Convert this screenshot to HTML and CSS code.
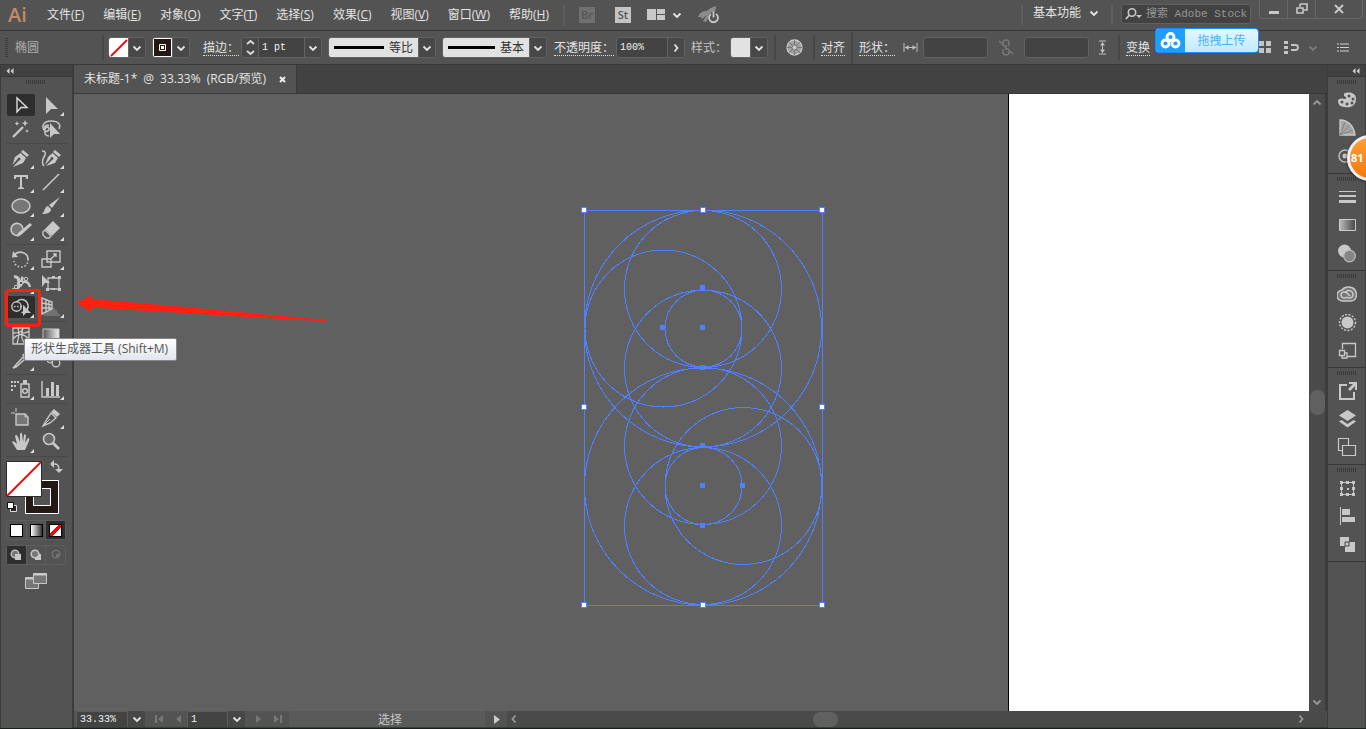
FILE: index.html
```html
<!DOCTYPE html>
<html lang="zh-CN">
<head>
<meta charset="utf-8">
<title>未标题-1</title>
<link rel="stylesheet" href="styles.css">
</head>
<body>
<svg class="sprite" aria-hidden="true">
  <symbol id="down" viewBox="0 0 10 10"><path d="M1.5 3.5 5 7 8.5 3.5" fill="none" stroke="currentColor" stroke-width="1.8"/></symbol>
  <symbol id="right" viewBox="0 0 10 10"><path d="M3.5 1.5 6.500 5 3.500 8.500" fill="none" stroke="currentColor" stroke-width="1.800"/></symbol>
  <symbol id="collapse" viewBox="0 0 8 6"><path d="M3.500 0v6L.5 3zM7.500 0v6l-3-3z" fill="#d0d0d0"/></symbol>
</svg>

<header class="menubar">
  <span class="logo">Ai</span>
  <nav class="menus">
    <a href="#">文件(<u>F</u>)</a><a href="#">编辑(<u>E</u>)</a><a href="#">对象(<u>O</u>)</a><a href="#">文字(<u>T</u>)</a><a href="#">选择(<u>S</u>)</a><a href="#">效果(<u>C</u>)</a><a href="#">视图(<u>V</u>)</a><a href="#">窗口(<u>W</u>)</a><a href="#">帮助(<u>H</u>)</a>
  </nav>
  <span class="rule tall"></span>
  <button class="app dim">Br</button>
  <button class="app">St</button>
  <button class="arrange" aria-label="排列文档">
    <svg width="18" height="12"><path d="M0 0h9v11H0zM10 0h8v5h-8zM10 6h8v5h-8z" fill="#c8c8c8"/></svg>
    <svg class="chev"><use href="#down"/></svg>
  </button>
  <button class="gpu" aria-label="GPU">
    <svg width="22" height="18" viewBox="0 0 22 18"><path d="M0 11C2 6 5 5 9 5 12 2 15 1 18 0c0 3 0 4-2 6-4 0-6 2-6 6l-2 4-3-1 4-6-5 4-1-2z" fill="#8c8c8c"/><path d="M13 8a4.500 4.500 0 1 0 5 0" fill="none" stroke="#c8c8c8" stroke-width="1.800"/><path d="M15.500 5.500v6" stroke="#c8c8c8" stroke-width="1.800"/></svg>
  </button>
  <div class="menubar-end">
    <span class="rule tall"></span>
    <button class="workspace-name">基本功能 <svg class="chev"><use href="#down"/></svg></button>
    <span class="rule tall"></span>
    <label class="search">
      <svg width="18" height="12" viewBox="0 0 18 12"><circle cx="7" cy="4.500" r="3.700" fill="none" stroke="#c8c8c8" stroke-width="1.600"/><path d="M4.500 7 .8 11" stroke="#c8c8c8" stroke-width="1.800"/><path d="M11 7h6l-3 3z" fill="#c8c8c8"/></svg>
      <input type="text" placeholder="搜索 Adobe Stock" aria-label="搜索 Adobe Stock">
    </label>
    <div class="window-buttons">
      <button aria-label="最小化"><svg width="12" height="12"><path d="M1 8h10v3H1z" fill="#c8c8c8"/></svg></button>
      <button aria-label="还原"><svg width="12" height="12"><path d="M4 1h7v6H8M4 1v3M1 5h6v5H1z" fill="none" stroke="#c8c8c8" stroke-width="1.600"/></svg></button>
      <button class="close" aria-label="关闭"><svg width="10" height="10"><path d="m1 1 8 8M9 1 1 9" stroke="#c8c8c8" stroke-width="2"/></svg></button>
    </div>
  </div>
</header>

<section class="controls">
  <span class="grip-v"></span>
  <span class="kind">椭圆</span>
  <span class="rule"></span>
  <div class="combo fill"><svg width="19" height="19"><path d="M0 0h19v19H0z" fill="#fff"/><path d="M2 18 18 2" stroke="#f00" stroke-width="1.800"/></svg><button aria-label="填色"><svg class="chev"><use href="#down"/></svg></button></div>
  <div class="combo stroke"><svg width="19" height="19"><path d="M.5.500h18v18H.5z" fill="#231815" stroke="#fff"/><path d="M6.500 6.500h6v6h-6z" fill="none" stroke="#fff"/><path d="M8 8h3v3H8z" fill="#fff"/></svg><button aria-label="描边颜色"><svg class="chev"><use href="#down"/></svg></button></div>
  <label class="dotted" for="weight">描边：</label>
  <div class="combo weight"><button class="spin" aria-label="增减"><svg width="11" height="17"><path d="m2 5 3.500-3L9 5M2 12l3.500 3L9 12" fill="none" stroke="#ddd" stroke-width="1.800"/></svg></button><input id="weight" value="1 pt"><button aria-label="描边粗细"><svg class="chev"><use href="#down"/></svg></button></div>
  <div class="combo profile"><span class="sample"><i></i>等比</span><button aria-label="宽度配置"><svg class="chev"><use href="#down"/></svg></button></div>
  <div class="combo brush"><span class="sample"><i></i>基本</span><button aria-label="画笔"><svg class="chev"><use href="#down"/></svg></button></div>
  <label class="dotted" for="opacity">不透明度：</label>
  <div class="combo opacity"><input id="opacity" value="100%"><button aria-label="不透明度选项"><svg class="chev"><use href="#right"/></svg></button></div>
  <span class="plain">样式：</span>
  <div class="combo style"><span class="pale"></span><button aria-label="图形样式"><svg class="chev"><use href="#down"/></svg></button></div>
  <span class="rule"></span>
  <button class="wheel" aria-label="重新着色"><svg width="17" height="17" viewBox="0 0 17 17"><circle cx="8.500" cy="8.500" r="7.500" fill="#a0a0a0" stroke="#ccc" stroke-width="1.300"/><path d="M8.500 1v15M1 8.500h15M3.200 3.200l10.600 10.600M13.800 3.200 3.200 13.800" stroke="#777"/><circle cx="8.500" cy="8.500" r="2.500" fill="#ccc" stroke="#777"/></svg></button>
  <span class="rule"></span>
  <a class="dotted" href="#">对齐</a>
  <span class="rule full"></span>
  <a class="dotted shape-label" href="#">形状：</a>
  <svg class="size-icon" width="15" height="9"><path d="M1 0v9M14 0v9M2 4.500h11" stroke="#c0c0c0"/><path d="M2 4.500 5.500 2v5zM13 4.500 9.500 2v5z" fill="#c0c0c0"/></svg>
  <input class="size" aria-label="宽度">
  <svg class="link" width="16" height="17"><path d="M5 7V4a3 3 0 0 1 6 0v3M5 10v3a3 3 0 0 0 6 0v-3M8 6v5M1 2l14 13" fill="none" stroke="#777" stroke-width="1.600"/></svg>
  <input class="size" aria-label="高度">
  <svg class="height-icon" width="9" height="15"><path d="M1 1h7M1 14h7M4.500 2v11" stroke="#c0c0c0"/><path d="M4.500 2 7 5.500H2zM4.500 13 7 9.500H2z" fill="#c0c0c0"/></svg>
  <span class="rule"></span>
  <a class="dotted" href="#">变换</a>
  <div class="controls-end">
    <svg width="15" height="15"><path d="M1 1h5v5H1zM8 1h5v5H8zM1 8h5v5H1zM8 8h5v5H8z" fill="#c4c4c4"/></svg>
    <svg width="15" height="13"><path d="M0 0h4v3H0zM0 5h4v3H0zM0 10h4v3H0z" fill="#c4c4c4"/><path d="M7 4h4.500a2.500 2.500 0 0 1 0 5H7" fill="none" stroke="#c4c4c4" stroke-width="1.800"/></svg>
    <svg class="chev faded"><use href="#down"/></svg>
    <button class="list" aria-label="面板菜单"><svg width="12" height="9"><path d="M0 1h2M3 1h9M0 4.500h2M3 4.500h9M0 8h2M3 8h9" stroke="#d0d0d0" stroke-width="1.200"/></svg></button>
  </div>
  <button class="upload"><span class="cloud"><svg width="22" height="17" viewBox="0 0 22 17" fill="none" stroke="#fff" stroke-width="2.800"><circle cx="10.500" cy="5" r="3.500"/><circle cx="5.500" cy="11.500" r="3.500"/><circle cx="15.500" cy="11.500" r="3.500"/></svg></span><span class="upload-text">拖拽上传</span></button>
</section>

<main class="workspace">
  <aside class="tools">
    <div class="panel-head"><svg width="8" height="6"><use href="#collapse"/></svg></div>
    <span class="grip-h"></span>
    <div class="tool-group">
      <button class="tool on" aria-label="选择"><svg viewBox="0 0 20 20"><path d="M6 3v14l4-4.500h6z" fill="none" stroke="#ddd" stroke-width="1.400"/></svg></button>
      <button class="tool more" aria-label="直接选择"><svg viewBox="0 0 20 20"><path d="M5 2v17l5-5h7z"/></svg></button>
      <button class="tool" aria-label="魔棒"><svg viewBox="0 0 20 20"><path d="M2 18 12 8" stroke="#c8c8c8" stroke-width="2.400"/><path d="m14 1 1 2.500L17.500 4 15 5l-1 2.500L13 5l-2.500-1L13 3.500zM6 2l.7 1.800L8.500 4.500 6.700 5.200 6 7l-.7-1.800-1.800-.7 1.800-.7zM16 10l.6 1.400 1.400.6-1.400.6L16 14l-.6-1.400L14 12l1.400-.6z"/></svg></button>
      <button class="tool" aria-label="套索"><svg viewBox="0 0 20 20"><path d="M4 12C0 8 2 2 10 2c8 0 10 4 8 8M8 6.500c-3-1-5 1-4 3M4 12c-1-3 2-5 4-3 1 3-3 4-4 3-1 3 1 5 4 5" fill="none" stroke="#c8c8c8" stroke-width="1.500"/><path d="M9 4v15l4-4h6z"/></svg></button>
    </div>
    <div class="tool-group">
      <button class="tool more" aria-label="钢笔"><svg viewBox="0 0 20 20"><path d="m12 2 6 5-2 2-6-5zM9.500 5l5.500 5-3 5L2 19l6-6.500A1.500 1.500 0 1 0 6.500 11L1.500 17 4 9z"/></svg></button>
      <button class="tool more" aria-label="曲率"><svg viewBox="0 0 20 20"><path d="m14 2 6 5-2 2-6-5zM11.500 5l5.500 5-3 5L5 18l6-6A1.500 1.500 0 1 0 9.500 11L4 17 7 9z"/><path d="M1 3c4 0 4 3 2 6s-2 7 0 9" fill="none" stroke="#c8c8c8" stroke-width="1.500"/></svg></button>
      <button class="tool more" aria-label="文字"><svg viewBox="0 0 20 20"><path d="M3 3h14v4h-1.500l-1-2H11v10l2 1v1H7v-1l2-1V5H5.500l-1 2H3z"/></svg></button>
      <button class="tool more" aria-label="直线段"><svg viewBox="0 0 20 20"><path d="M2 18 18 2" stroke="#c8c8c8" stroke-width="1.600"/></svg></button>
      <button class="tool more" aria-label="椭圆"><svg viewBox="0 0 20 20"><ellipse cx="10" cy="10" rx="9" ry="7" fill="#777" stroke="#c8c8c8" stroke-width="1.500"/></svg></button>
      <button class="tool more" aria-label="画笔"><svg viewBox="0 0 20 20"><path d="m19 1-8 11-3-3zM7 10l3 3c0 4-4 5-9 5 3-2 2-7 6-8z"/></svg></button>
      <button class="tool more" aria-label="Shaper"><svg viewBox="0 0 20 20"><path d="M8 15a6 6 0 1 1 4-6" fill="#777" stroke="#c8c8c8" stroke-width="1.600"/><path d="m19 3 2 2-11 10-4 2 1-4z"/></svg></button>
      <button class="tool more" aria-label="橡皮擦"><svg viewBox="0 0 20 20"><path d="m12 1 7 7-8 8-7-7z"/><path d="m4 10 6 6-2 2H5l-3-3v-3z" fill="none" stroke="#c8c8c8" stroke-width="1.400"/></svg></button>
    </div>
    <div class="tool-group">
      <button class="tool more" aria-label="旋转"><svg viewBox="0 0 20 20"><path d="M4 5c5-4 13-1 13 5" fill="none" stroke="#c8c8c8" stroke-width="1.700"/><path d="M17 10A7 7 0 0 1 3 12" fill="none" stroke="#c8c8c8" stroke-width="1.700" stroke-dasharray="1.500 2"/><path d="m2 2 5 6-6 .5z"/></svg></button>
      <button class="tool more" aria-label="缩放"><svg viewBox="0 0 20 20"><path d="M6 2h13v11H6zM1 10h9v8H1z" fill="none" stroke="#c8c8c8" stroke-width="1.400"/><path d="m10 10 5-5m-3 0h3v3" fill="none" stroke="#c8c8c8" stroke-width="1.400"/></svg></button>
      <button class="tool more" aria-label="宽度"><svg viewBox="0 0 20 20"><path d="M3 4c4-1 6 3 4 8M12 4c-3 3 0 6-3 9" fill="none" stroke="#c8c8c8" stroke-width="3"/><path d="M1 16c5 2 7-2 9-5s7-4 9 3" fill="none" stroke="#c8c8c8" stroke-width="2.400"/><path d="m4 15 12-9" stroke="#c8c8c8"/><circle cx="5" cy="14" r="1.700" fill="#535353" stroke="#ccc"/><circle cx="10" cy="10" r="1.700" fill="#535353" stroke="#ccc"/><circle cx="15" cy="6" r="1.700" fill="#535353" stroke="#ccc"/></svg></button>
      <button class="tool" aria-label="自由变换"><svg viewBox="0 0 20 20"><path d="M7 5h11v11H7z" fill="none" stroke="#c8c8c8" stroke-width="1.300"/><path d="M1 2v12l3-4h5zM5 15h3v3H5zM17 15h3v3h-3zM17 3h3v3h-3zM11 3h3v2h-3zM11 15h3v2h-3z"/></svg></button>
      <button class="tool more on" aria-label="形状生成器"><svg viewBox="0 0 20 20"><circle cx="5.500" cy="9.500" r="4.700" fill="none" stroke="#c8c8c8" stroke-width="1.400"/><path d="M5.500 5a6.500 6.500 0 1 1 5 10.500" fill="none" stroke="#c8c8c8" stroke-width="1.400"/><path d="M3 9.500h11" stroke="#c8c8c8" stroke-width="1.500" stroke-dasharray="1.500 1.500"/><path d="M12 8v11l3-3h5z"/></svg></button>
      <button class="tool more" aria-label="透视网格"><svg viewBox="0 0 20 20"><path d="M1 1v16l10-5V5zM1 6l10 2M1 11h10M5 3v12M8 4v9" fill="none" stroke="#c8c8c8" stroke-width="1.400"/><path d="M11 12h3M8 14h8M5 16h12M3 18h16" stroke="#919191"/></svg></button>
    </div>
    <div class="tool-group">
      <button class="tool" aria-label="网格"><svg viewBox="0 0 20 20"><path d="M2 2h16v16H2zM2 7c7 0 9-1 10-5M2 13c5-6 10-6 16 0M7 2c2 7 0 11-1 16M12 2c-3 9 0 14 3 16M11 7c3 0 5 0 7-2" fill="none" stroke="#c8c8c8" stroke-width="1.300"/></svg></button>
      <button class="tool" aria-label="渐变"><svg viewBox="0 0 20 20"><defs><linearGradient id="grad"><stop stop-color="#555"/><stop offset="1" stop-color="#eee"/></linearGradient></defs><path d="M2 3h16v14H2z" fill="url(#grad)" stroke="#c8c8c8"/></svg></button>
      <button class="tool more" aria-label="吸管"><svg viewBox="0 0 20 20"><path d="M3 17 12 7l2 2-9 8-3 1z" fill="none" stroke="#c8c8c8" stroke-width="1.500"/><path d="m11 5 5-4 3 3-4 5z"/></svg></button>
      <button class="tool" aria-label="混合"><svg viewBox="0 0 20 20"><path d="M2 3h7v7H2z"/><circle cx="9" cy="10" r="3" fill="#777" stroke="#c8c8c8"/><circle cx="15" cy="13" r="3.800" fill="#535353" stroke="#c8c8c8" stroke-width="1.400"/></svg></button>
    </div>
    <div class="tool-group">
      <button class="tool more" aria-label="符号喷枪"><svg viewBox="0 0 20 20"><path d="M10 5h8v13h-8z" fill="none" stroke="#c8c8c8" stroke-width="1.500"/><path d="M12 1h4v4h-4zM0 2h2v2H0zM3 2h2v2H3zM6 2h2v2H6zM0 6h2v2H0zM3 6h2v2H3zM0 10h2v2H0z"/><circle cx="14" cy="12" r="2.300" fill="none" stroke="#c8c8c8" stroke-width="1.500"/></svg></button>
      <button class="tool more" aria-label="柱形图"><svg viewBox="0 0 20 20"><path d="M1 2v16h18" fill="none" stroke="#c8c8c8" stroke-width="1.400"/><path d="M5 9h3v8H5zM10 3h3v14h-3zM15 6h3v11h-3z"/></svg></button>
    </div>
    <div class="tool-group">
      <button class="tool" aria-label="画板"><svg viewBox="0 0 20 20"><path d="M5 6h9l3 3v8H5z" fill="#777" stroke="#c8c8c8" stroke-width="1.400"/><path d="M0 5h4M5 0v4M14 6v3h3" fill="none" stroke="#c8c8c8"/></svg></button>
      <button class="tool more" aria-label="切片"><svg viewBox="0 0 20 20"><path d="m13 1 6 5-3 3-6-5z"/><path d="m10 5 5 5-6 5-7 3 4-7z" fill="none" stroke="#c8c8c8" stroke-width="1.400"/><path d="m3 17 6-6" stroke="#c8c8c8"/></svg></button>
      <button class="tool more" aria-label="抓手"><svg viewBox="0 0 20 20"><path d="M6 18 1 10c1-2 3 0 5 2L4 4c1-2 2-1 3 1l2 5V2c1-2 2-1 2 0l1 8 1-7c1-2 2 0 2 1l-1 7 3-5c2 0 1 2 1 3l-4 9z"/></svg></button>
      <button class="tool" aria-label="缩放视图"><svg viewBox="0 0 20 20"><circle cx="8" cy="7" r="5.500" fill="#696969" stroke="#c8c8c8" stroke-width="1.600"/><path d="m12 11 6 6" stroke="#c8c8c8" stroke-width="2.800"/></svg></button>
    </div>
    <button class="paint" aria-label="填色和描边"><svg width="60" height="56" viewBox="0 0 60 56"><path d="M19.500 20.500h33v33h-33z" fill="none" stroke="#fff"/><path d="M23.500 24.500h25v25h-25z" fill="none" stroke="#231815" stroke-width="7"/><path d="M27.500 28.500h17v17h-17z" fill="#535353" stroke="#fff"/><path d="M.5 1.500h35v35H.5z" fill="#fff" stroke="#2b2b2b"/><path d="M1 36 35 2" stroke="#f00" stroke-width="1.800"/><path d="M46 4h3q4 0 4 6" fill="none" stroke="#c8c8c8" stroke-width="1.400"/><path d="m48 0-4 4 4 4zM49 9h8l-4 4z" fill="#c8c8c8"/><path d="M4.500 45.500h6v6h-6z" fill="#222" stroke="#ddd"/><path d="M1.500 42.500h6v6h-6z" fill="#fff" stroke="#111"/></svg></button>
    <div class="mode-row">
      <button aria-label="颜色"><span class="chip"></span></button><button aria-label="渐变"><span class="chip gradient"></span></button><button class="on" aria-label="无"><span class="chip none"></span></button>
    </div>
    <div class="mode-row draw">
      <button class="on" aria-label="正常绘图"><svg width="12" height="12"><circle cx="5" cy="5" r="3.800" fill="#777" stroke="#bbb" stroke-width="1.500"/><path d="M5 5h6v6H5z" fill="#c8c8c8"/></svg></button><button aria-label="背面绘图"><svg width="12" height="12"><path d="M5 5h6v6H5z" fill="#c8c8c8"/><circle cx="5" cy="5" r="3.800" fill="#777" stroke="#c8c8c8" stroke-width="1.500"/></svg></button><button aria-label="内部绘图"><svg width="12" height="12"><circle cx="6" cy="5" r="3.800" fill="none" stroke="#717171" stroke-width="1.500"/><path d="M6 5h3v3H6z" fill="#717171"/></svg></button>
    </div>
    <button class="screen-mode" aria-label="更改屏幕模式"><svg width="22" height="16"><path d="M.5 4.500h13v11H.5z" fill="#777" stroke="#c8c8c8"/><path d="M8.500.5h13v10h-13z" fill="#777" stroke="#c8c8c8"/><path d="M8 1.500h14M1 5.500h7" stroke="#c8c8c8" stroke-width="2"/></svg></button>
    <span class="callout"></span>
    <svg class="arrow" width="252" height="30" viewBox="76 293 252 30"><path d="M76.500 303 92 295l-1 4 99 8.500 136 12.500v1.500L190 313.500 91 307.500l1 5z" fill="#ff2010"/></svg>
    <span class="tip" role="tooltip">形状生成器工具 (Shift+M)</span>
  </aside>

  <section class="document">
    <div class="tabs"><button class="tab"><span class="tab-title"><span>未标题-1*</span> <span>@</span> <span>33.33%</span> <span>(RGB/预览)</span></span><svg width="7" height="7"><path d="m1 1 5 5M6 1 1 6" stroke="#eee" stroke-width="2"/></svg></button></div>
    <div class="view">
      <div class="canvas">
        <div class="artboard"></div>
        <svg class="drawing" width="244" height="402" viewBox="581 207 244 402">
          <g fill="none" stroke="#4f80ff" shape-rendering="crispEdges">
            <path d="M584.500 210.500h238v395h-238z"/>
            <circle cx="703" cy="328.500" r="118.500"/><circle cx="703" cy="486.500" r="118.500"/>
            <circle cx="703" cy="289" r="78.500"/><circle cx="703" cy="368.500" r="78.500"/>
            <circle cx="703" cy="446" r="78.500"/><circle cx="703" cy="526" r="78.500"/>
            <circle cx="663.500" cy="328.500" r="78.500"/><circle cx="743.500" cy="486" r="78.500"/>
            <circle cx="703.500" cy="328.500" r="38.500"/><circle cx="703.500" cy="486" r="38.500"/>
          </g>
          <path fill="#4f80ff" d="M700 285h5v5h-5zM660 325h5v5h-5zM700 325h5v5h-5zM700 365h5v5h-5zM700 443h5v5h-5zM700 483h5v5h-5zM740 483h5v5h-5zM700 523h5v5h-5z"/>
          <path fill="#fff" stroke="#4f80ff" d="M581.500 207.500h5v5h-5zM700.500 207.500h5v5h-5zM819.500 207.500h5v5h-5zM581.500 404.500h5v5h-5zM819.500 404.500h5v5h-5zM581.500 602.500h5v5h-5zM700.500 602.500h5v5h-5zM819.500 602.500h5v5h-5z"/>
        </svg>
      </div>
      <div class="vscroll"><svg class="chev up"><use href="#down"/></svg><span class="thumb"></span><svg class="chev"><use href="#down"/></svg></div>
    </div>
    <footer class="status">
      <input class="zoom" value="33.33%" aria-label="缩放比例"><button class="drop" aria-label="缩放列表"><svg class="chev"><use href="#down"/></svg></button>
      <div class="steps"><button class="step" aria-label="第一个"><svg width="10" height="10"><path d="M1 1h2v8H1zM9 1v8L4 5z" fill="#777"/></svg></button><button class="step" aria-label="上一个"><svg width="10" height="10"><path d="M8 1v8L3 5z" fill="#777"/></svg></button></div>
      <input class="page-no" value="1" aria-label="画板"><button class="drop" aria-label="画板列表"><svg class="chev"><use href="#down"/></svg></button>
      <div class="steps"><button class="step" aria-label="下一个"><svg width="10" height="10"><path d="M2 1v8l5-4z" fill="#777"/></svg></button><button class="step" aria-label="最后一个"><svg width="10" height="10"><path d="M1 1v8l5-4zM7 1h2v8H7z" fill="#777"/></svg></button></div>
      <span class="current">选择</span>
      <button class="play" aria-label="显示"><svg width="6" height="9"><path d="M0 0v9l6-4.500z" fill="#ccc"/></svg></button>
      <div class="hscroll"><svg class="chev left"><use href="#right"/></svg><span class="thumb"></span><svg class="chev"><use href="#right"/></svg></div>
    </footer>
  </section>

  <aside class="dock">
    <div class="panel-head end"><svg width="8" height="6"><use href="#collapse"/></svg></div>
    <div class="dock-group"><span class="grip-h"></span>
      <button aria-label="颜色"><svg viewBox="0 0 20 20"><path d="M7 4c1-2 12-3 12 5 0 7-6 9-11 8-5 0-7-3-7-6 0-2 3-3 6-2 3 0 3-2 0-3z"/><g fill="#535353"><circle cx="12" cy="6" r="1.500"/><circle cx="16" cy="9" r="1.500"/><circle cx="15" cy="13" r="1.500"/><circle cx="10" cy="14" r="1.500"/><circle cx="5" cy="12" r="1.500"/></g></svg></button>
      <button aria-label="颜色参考"><svg viewBox="0 0 20 20"><path d="M3 2c9 0 14 7 15 15H3z" fill="#a5a5a5" stroke="#ccc" stroke-width="1.300"/><path d="M3 17 8 4M3 17 13 7M3 17l13-5" stroke="#868686"/></svg></button>
      <button aria-label="色板"><svg viewBox="0 0 20 20"><circle cx="8" cy="10" r="6" fill="none" stroke="#bbb" stroke-width="1.500"/><circle cx="8" cy="10" r="2.500"/></svg></button>
    </div>
    <div class="dock-group"><span class="grip-h"></span>
      <button aria-label="描边"><svg viewBox="0 0 20 20"><path d="M2 4h17v1H2zM2 8h17v2H2zM2 13h17v3H2z"/></svg></button>
      <button aria-label="渐变"><svg viewBox="0 0 20 20"><defs><linearGradient id="grad2"><stop stop-color="#bbb"/><stop offset="1" stop-color="#454545"/></linearGradient></defs><path d="M2.500 4.500h16v11h-16z" fill="url(#grad2)" stroke="#ccc"/></svg></button>
      <button aria-label="透明度"><svg viewBox="0 0 20 20"><circle cx="7.500" cy="8" r="6.500"/><circle cx="12.500" cy="13" r="5.800" fill="#858585" stroke="#bbb" stroke-width="1.300"/></svg></button>
    </div>
    <div class="dock-group"><span class="grip-h"></span>
      <button aria-label="库"><svg viewBox="0 0 20 20"><path d="M6 17a5.500 5.500 0 0 1-1-11C8 2 15 2 18 6c3 5 1 11-4 11z" fill="#777" stroke="#c8c8c8" stroke-width="1.500"/><path d="M10 13c-2 2-6 1-6-2s4-4 6-2l3 3M8 9c2-4 8-3 8 2 0 3-4 4-6 2" fill="none" stroke="#ccc" stroke-width="1.500"/></svg></button>
      <button aria-label="外观"><svg viewBox="0 0 20 20"><circle cx="10.500" cy="10.500" r="6"/><circle cx="10.500" cy="10.500" r="8" fill="none" stroke="#c8c8c8" stroke-width="1.400" stroke-dasharray="2 1.500"/></svg></button>
      <button aria-label="图形样式"><svg viewBox="0 0 20 20"><path d="M5.500 9V3.500h13v13h-8M2.500 10.500h5v5h-5zM5 16v2h5v-5H8" fill="none" stroke="#c8c8c8" stroke-width="1.300"/></svg></button>
    </div>
    <div class="dock-group"><span class="grip-h"></span>
      <button aria-label="资源导出"><svg viewBox="0 0 20 20"><path d="M10 4H3v14h14v-7" fill="none" stroke="#c8c8c8" stroke-width="2"/><path d="M12 1h8v8h-2V5l-5 5-2-2 5-5h-4z"/></svg></button>
      <button aria-label="图层"><svg viewBox="0 0 20 20"><path d="m10.500 1 8.500 5.500-8.500 5.500L2 6.500zM2 12.500l2.500-1.500 6 4 6-4 2.500 1.500-8.500 6z"/></svg></button>
      <button aria-label="画板"><svg viewBox="0 0 20 20"><path d="M1.500 1.500h10v12h-10z" fill="none" stroke="#c8c8c8" stroke-width="1.200"/><path d="M5.500 8.500h13v10h-13z" fill="#535353" stroke="#c8c8c8" stroke-width="1.200"/></svg></button>
    </div>
    <div class="dock-group"><span class="grip-h"></span>
      <button aria-label="变换"><svg viewBox="0 0 20 20"><path d="M4.500 4.500h12v12h-12z" fill="none" stroke="#c8c8c8"/><path d="M3 3h3v3H3zM9 3h3v3H9zM15 3h3v3h-3zM3 9h3v3H3zM15 9h3v3h-3zM3 15h3v3H3zM9 15h3v3H9zM15 15h3v3h-3zM10 10h2v2h-2z"/></svg></button>
      <button aria-label="对齐"><svg viewBox="0 0 20 20"><path d="M3 1h1v18H3zM5 3h8v6H5zM5 11h13v5H5z"/></svg></button>
      <button aria-label="路径查找器"><svg viewBox="0 0 20 20"><path d="M3 3h9v5h6v10H8v-6H3z"/><path d="M8 12V8h4v4z" fill="#c8c8c8" stroke="#444"/></svg></button>
    </div>
    <span class="bubble">81</span>
  </aside>
</main>
</body>
</html>
```

FILE: styles.css
```css
* { box-sizing: border-box; }

body {
  margin: 0;
  height: 100vh;
  display: flex;
  flex-direction: column;
  overflow: hidden;
  background: #535353;
  border-bottom: 1px solid #17211b;
  color: #e4e4e4;
  font: 12px/16px "Open Sans", "Noto Sans CJK SC", sans-serif;
}

svg { display: block; flex: none; }
.sprite { position: absolute; width: 0; height: 0; }

button, input {
  font: inherit;
  color: inherit;
  border: 0;
  padding: 0;
  margin: 0;
  background: none;
  min-width: 0;
}

button { display: flex; align-items: center; justify-content: center; flex: none; }
a { color: inherit; text-decoration: none; }
.chev { width: 10px; height: 10px; }

.rule { width: 2px; height: 25px; background: #474747; flex: none; }
.rule.tall { height: 20px; background: #5e5e5e; }
.rule.full { height: 32px; }

/* Menu bar */
.menubar {
  flex: none;
  height: 31px;
  display: flex;
  align-items: center;
  border-bottom: 1px solid #383838;
}
.logo {
  width: 39px;
  padding-left: 8px;
  font-size: 20px;
  font-weight: 600;
  line-height: 28px;
  color: #c08a68;
}
.menus { display: flex; gap: 19px; padding-left: 8px; margin-right: 14px; white-space: nowrap; }
.app {
  width: 16px;
  height: 16px;
  margin-left: 14px;
  background: #c4c4c4;
  color: #555;
  font-size: 11px;
  font-weight: 600;
}
.app + .app { margin-left: 20px; }
.app.dim { background: #707070; }
.arrange { margin-left: 16px; gap: 7px; }
.gpu { margin-left: 16px; }
.menubar-end { margin-left: auto; display: flex; align-items: center; height: 30px; padding-right: 3px; }
.workspace-name { margin: 0 12px 4px 10px; gap: 8px; }
.search {
  display: flex;
  align-items: center;
  gap: 3px;
  width: 130px;
  height: 20px;
  margin: 0 8px 2px 8px;
  padding-left: 3px;
  background: #424242;
  border: 1px solid #606060;
  border-radius: 3px;
}
.search input { flex: 1; width: 100px; outline: 0; font: 11px/16px "Liberation Mono", "Noto Sans CJK SC", monospace; }
.search input::placeholder { color: #969696; opacity: 1; }
.window-buttons {
  display: flex;
  align-self: flex-start;
  height: 19px;
  border: 1px solid #666;
  border-top: 0;
  border-radius: 0 0 4px 4px;
}
.window-buttons button { width: 28px; border-right: 1px solid #666; }
.window-buttons .close { width: 46px; border: 0; }

/* Control bar */
.controls {
  position: relative;
  flex: none;
  height: 34px;
  display: flex;
  align-items: center;
  padding: 0 0 0 5px;
  border-bottom: 1px solid #383838;
  white-space: nowrap;
}
.grip-v { width: 3px; height: 20px; background: repeating-linear-gradient(#3c3c3c 0 1px, #535353 1px 2px); }
.kind { width: 94px; padding-left: 7px; color: #adadad; }
.combo {
  display: flex;
  align-items: stretch;
  flex: none;
  height: 21px;
  border: 1px solid #626262;
  border-radius: 3px;
  background: #434343;
  overflow: hidden;
}
.combo button { width: 17px; border-left: 1px solid #626262; background: #484848; }
.combo input { flex: 1; width: 10px; padding: 0 3px; }
.combo input, .status input { font: 10px/16px "Liberation Mono", monospace; color: #f4f4f4; }
.fill { margin-left: 4px; }
.stroke { margin: 0 13px 0 6px; }
.dotted { line-height: 15px; border-bottom: 1px dotted #ddd; flex: none; }
.weight { width: 81px; margin: 0 6px 0 2px; }
.combo .spin { border-left: 0; border-right: 1px solid #626262; }
.profile { margin-right: 6px; }
.brush { margin-right: 7px; }
.sample {
  display: flex;
  align-items: center;
  gap: 5px;
  padding: 0 5px;
  background: #e2e2e2;
  color: #333;
}
.sample i { width: 50px; height: 3px; background: #000; }
.brush .sample i { width: 47px; }
.opacity { width: 69px; margin: 0 6px 0 2px; }
.plain { color: #c4c4c4; }
.style { margin: 0 6px 0 3px; }
.pale { width: 19px; background: #e2e2e2; }
.wheel { margin: 0 10px; }
.wheel ~ .dotted { margin: 0 6px; }
.size-icon { margin: 0 5px 0 2px; }
.size {
  width: 65px;
  height: 21px;
  flex: none;
  background: #434343;
  border: 1px solid #626262;
  border-radius: 3px;
}
.link { margin: 0 10px; }
.height-icon { margin: 0 11px 0 9px; }
.controls-end { margin-left: auto; display: flex; align-items: center; gap: 11px; padding-right: 17px; }
.controls-end .faded { margin-left: -2px; color: #7a7a7a; }
.list { margin-left: 8px; }
.upload {
  position: absolute;
  right: 107px;
  top: -3px;
  width: 104px;
  height: 25px;
  align-items: stretch;
  border: 1px solid #1b8df8;
  border-radius: 4px;
  background: linear-gradient(#e4f6ff, #c3ebff);
  overflow: hidden;
}
.cloud { width: 29px; display: grid; place-items: center; background: #1e9fff; }
.upload-text { flex: 1; align-self: center; color: #49b2f6; }

/* Workspace */
.workspace { flex: 1; min-height: 0; display: flex; }
.panel-head {
  height: 12px;
  padding: 0 5px;
  display: flex;
  align-items: center;
  background: #424242;
  border-bottom: 1px solid #383838;
}
.panel-head.end { justify-content: flex-end; }
.grip-h { display: block; width: 19px; height: 4px; background: repeating-linear-gradient(90deg, #3a3a3a 0 1px, #535353 1px 2px); }

.tools {
  position: relative;
  flex: none;
  width: 74px;
  border-left: 1px solid #3c3c3c;
  border-right: 2px solid #3c3c3c;
}
.tools > .grip-h { margin: 3px 0 9px 25px; }
.tool-group {
  display: grid;
  grid-template-columns: 28px 28px;
  grid-auto-rows: 24px;
  column-gap: 2px;
  margin: 0 5px 2px;
  padding: 0 1px 2px;
  border-bottom: 1px solid #484848;
}
.tool { position: relative; height: 22px; align-self: center; border-radius: 2px; }
.tool svg { width: 20px; height: 20px; fill: #c8c8c8; overflow: visible; }
.tool.on { background: #2e2e2e; }
.tool.more::after {
  content: "";
  position: absolute;
  right: 1px;
  bottom: 0;
  border: 2px solid transparent;
  border-right-color: #ddd;
  border-bottom-color: #ddd;
}
.paint { margin: 3px 5px 0; }
.mode-row {
  display: flex;
  width: 60px;
  margin: 4px 5px 5px;
  height: 20px;
  border: 1px solid #5e5e5e;
  border-radius: 3px;
}
.mode-row button { flex: 1; border-right: 1px solid #5e5e5e; }
.mode-row button:last-child { border: 0; }
.mode-row .on { background: #2e2e2e; }
.chip { width: 13px; height: 13px; border: 1px solid #000; background: #fff; }
.chip.gradient { background: linear-gradient(90deg, #fff, #333); }
.chip.none { background: linear-gradient(135deg, #fff 38%, #f00 38% 62%, #fff 62%); }
.screen-mode { margin: 8px 0 0 24px; }

.callout {
  position: absolute;
  left: 4px;
  top: 224px;
  width: 36px;
  height: 38px;
  border: 3px solid #ff2010;
  border-radius: 4px;
  z-index: 2;
}
.arrow { position: absolute; left: 75px; top: 228px; z-index: 2; }
.tip {
  position: absolute;
  left: 23px;
  top: 273px;
  z-index: 2;
  padding: 2px 8px 3px 6px;
  border: 1px solid #888;
  border-radius: 2px;
  background: linear-gradient(#fff, #e3e4f0);
  color: #555;
  white-space: nowrap;
}

.document { flex: 1; min-width: 0; display: flex; flex-direction: column; }
.tabs { flex: none; height: 29px; display: flex; background: #424242; border-bottom: 1px solid #383838; }
.tab { gap: 13px; padding: 0 10px; background: #535353; border-right: 1px solid #383838; }
.tab-title { display: flex; gap: 6px; }
.view { flex: 1; min-height: 0; display: flex; }
.canvas { position: relative; flex: 1; display: flex; justify-content: flex-end; background: #606060; overflow: hidden; }
.artboard { width: 301px; background: #fff; border-left: 1px solid #000; }
.drawing { position: absolute; left: 507px; top: 113px; }
.vscroll {
  width: 18px;
  display: flex;
  flex-direction: column;
  align-items: center;
  padding: 4px 0;
  background: #4a4a4a;
  border-right: 2px solid #3c3c3c;
  color: #999;
}
.vscroll .thumb { width: 15px; height: 25px; margin: auto 0; border-radius: 7px; background: #606060; }
.up, .left { transform: rotate(180deg); }

.status {
  flex: none;
  height: 17px;
  display: flex;
  align-items: stretch;
  padding-left: 2px;
  background: #535353;
  border-bottom: 1px solid #3c3c3c;
}
.status input { padding: 0 3px; background: #434343; border: 1px solid #5c5c5c; border-bottom: 0; }
.zoom { width: 52px; }
.drop { width: 17px; background: #474747; }
.steps { display: flex; padding-left: 4px; }
.step { width: 19px; }
.page-no { width: 41px; }
.current { width: 196px; margin: 0 2px; text-align: center; line-height: 18px; background: #5a5a5a; color: #c8c8c8; padding-left: 6px; }
.play { width: 20px; }
.hscroll { flex: 1; display: flex; align-items: center; justify-content: space-between; padding: 0 21px 0 2px; background: #4a4a4a; color: #999; }
.hscroll .thumb { width: 25px; height: 15px; border-radius: 7px; background: #606060; margin-right: 165px; }

.dock { position: relative; flex: none; width: 39px; border-left: 1px solid #3c3c3c; border-right: 1px solid #3c3c3c; }
.dock-group { display: flex; flex-direction: column; align-items: center; height: 97px; padding-top: 3px; border-bottom: 1px solid #383838; }
.dock-group .grip-h { margin-bottom: 2px; }
.dock-group button { width: 28px; height: 28px; }
.dock-group svg { width: 20px; height: 20px; fill: #c8c8c8; }
.bubble {
  position: absolute;
  right: -28px;
  top: 70px;
  width: 46px;
  height: 46px;
  padding-left: 1px;
  border: 3px solid #eee;
  border-radius: 50%;
  background: linear-gradient(#ff9d38, #f57a0c);
  box-shadow: 0 1px 3px #222;
  color: #fff;
  font: bold 11px/40px "Open Sans", sans-serif;
}
```
